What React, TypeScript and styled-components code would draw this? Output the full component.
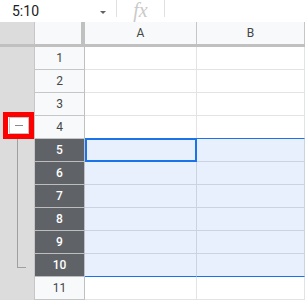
import styled, { createGlobalStyle, css } from "styled-components";

const GlobalStyle = createGlobalStyle`
  body {
    margin: 0;
    font-family: Roboto, "Liberation Sans", Arial, sans-serif;
    background: #ffffff;
    overflow: hidden;
  }
`;

const Page = styled.div`
  width: 305px;
  height: 301px;
  overflow: hidden;
`;

const FormulaBar = styled.div`
  display: flex;
  align-items: flex-start;
  height: 22px;
  background: #ffffff;
`;

const NameBox = styled.div`
  width: 116px;
  height: 22px;
  display: flex;
  align-items: center;
  justify-content: space-between;
  padding: 0 10px 0 12px;
  box-sizing: border-box;
  font-size: 14px;
  color: #202124;
`;

const Caret = styled.span`
  width: 0;
  height: 0;
  border-left: 3px solid transparent;
  border-right: 3px solid transparent;
  border-top: 3px solid #5f6368;
  margin-top: 2px;
`;

const Divider = styled.div`
  width: 1px;
  height: 17px;
  background: #e0e0e0;
`;

const Fx = styled.div`
  width: 47px;
  text-align: center;
  font-family: "Liberation Serif", "DejaVu Serif", serif;
  font-style: italic;
  font-size: 20px;
  line-height: 20px;
  color: #cacaca;
`;

const HeaderRow = styled.div`
  display: flex;
  height: 22px;
  border-bottom: 3px solid #c0c0c0;
  background: #f8f9fa;
`;

const GutterHead = styled.div`
  width: 34px;
  flex: none;
  background: #dcdcdc;
  border-right: 1px solid #c6c6c6;
`;

const Corner = styled.div`
  width: 46px;
  flex: none;
  background: #f8f9fa;
  border-right: 4px solid #c0c0c0;
`;

const ColHeader = styled.div<{ $w?: number }>`
  width: ${(p) => (p.$w ? `${p.$w}px` : "auto")};
  flex: ${(p) => (p.$w ? "none" : "1")};
  box-sizing: border-box;
  display: flex;
  align-items: center;
  justify-content: center;
  font-size: 12px;
  color: #444746;
  background: #f8f9fa;
  border-right: 1px solid #c6c6c6;
`;

const Row = styled.div`
  display: flex;
  height: 23px;
`;

const Gutter = styled.div`
  position: relative;
  width: 34px;
  flex: none;
  background: #dcdcdc;
  border-right: 1px solid #c6c6c6;
`;

const Bracket = styled.div<{ $end?: boolean }>`
  position: absolute;
  left: 17px;
  top: 0;
  width: ${(p) => (p.$end ? "8px" : "0")};
  height: ${(p) => (p.$end ? "13px" : "23px")};
  border-left: 1px solid #a0a0a0;
  border-bottom: ${(p) => (p.$end ? "1px solid #a0a0a0" : "none")};
`;

const Callout = styled.div`
  position: absolute;
  left: 3px;
  top: -4px;
  width: 31px;
  height: 27px;
  box-sizing: border-box;
  border: 5px solid #ff0000;
  background: #ffffff;
  display: flex;
  align-items: center;
  justify-content: center;
`;

const CollapseButton = styled.div`
  width: 20px;
  height: 17px;
  box-sizing: border-box;
  border: 1px solid #c4c4c4;
  background: #ffffff;
  display: flex;
  align-items: center;
  justify-content: center;

  &::after {
    content: "";
    width: 8px;
    height: 1px;
    background: #8a8a8a;
  }
`;

const Stem = styled.div`
  position: absolute;
  left: 17px;
  top: 23px;
  width: 1px;
  height: 1px;
  background: #a0a0a0;
`;

const RowHeader = styled.div<{ $selected: boolean }>`
  width: 50px;
  flex: none;
  display: flex;
  align-items: center;
  justify-content: center;
  font-size: 12px;
  box-sizing: border-box;
  border-right: 1px solid #c0c0c0;
  ${(p) =>
    p.$selected
      ? css`
          background: #5f6368;
          color: #ffffff;
          font-weight: 500;
          border-bottom: 1px solid #bdbdbd;
        `
      : css`
          background: #f8f9fa;
          color: #444746;
          border-bottom: 1px solid #c6c6c6;
        `}
`;

const Cell = styled.div<{
  $w?: number;
  $selected: boolean;
  $first: boolean;
  $last: boolean;
  $active?: boolean;
}>`
  width: ${(p) => (p.$w ? `${p.$w}px` : "auto")};
  flex: ${(p) => (p.$w ? "none" : "1")};
  box-sizing: border-box;
  border-right: 1px solid ${(p) => (p.$selected ? "#c9d3e2" : "#e2e3e3")};
  border-bottom: 1px solid ${(p) => (p.$selected ? "#c9d3e2" : "#e2e3e3")};
  background: ${(p) => (p.$selected ? "#e8f0fe" : "#ffffff")};
  ${(p) =>
    p.$first &&
    css`
      border-top: 1px solid #1a73e8;
      margin-top: -1px;
      height: 24px;
    `}
  ${(p) =>
    p.$last &&
    css`
      border-bottom: 1px solid #1a73e8;
    `}
  ${(p) =>
    p.$active &&
    css`
      border: 2px solid #1a73e8;
    `}
`;

const rows = [1, 2, 3, 4, 5, 6, 7, 8, 9, 10, 11];

export default function App() {
  return (
    <Page>
      <GlobalStyle />
      <FormulaBar>
        <NameBox>
          5:10
          <Caret />
        </NameBox>
        <Divider />
        <Fx>fx</Fx>
        <Divider />
      </FormulaBar>
      <HeaderRow>
        <GutterHead />
        <Corner />
        <ColHeader $w={112}>A</ColHeader>
        <ColHeader>B</ColHeader>
      </HeaderRow>
      {rows.map((n) => {
        const selected = n >= 5 && n <= 10;
        return (
          <Row key={n}>
            <Gutter>
              {n === 4 && (
                <>
                  <Callout>
                    <CollapseButton />
                  </Callout>
                  <Stem />
                </>
              )}
              {n >= 5 && n <= 9 && <Bracket />}
              {n === 10 && <Bracket $end />}
            </Gutter>
            <RowHeader $selected={selected}>{n}</RowHeader>
            <Cell
              $w={112}
              $selected={selected}
              $first={n === 5}
              $last={n === 10}
              $active={n === 5}
            />
            <Cell $selected={selected} $first={n === 5} $last={n === 10} />
          </Row>
        );
      })}
    </Page>
  );
}
